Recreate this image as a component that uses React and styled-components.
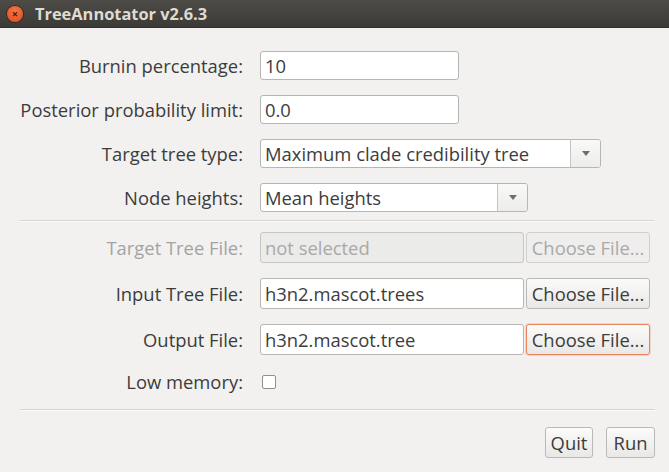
import styled, { createGlobalStyle } from "styled-components";

const GlobalStyle = createGlobalStyle`
  html, body {
    margin: 0;
    padding: 0;
    background: #f2f1f0;
  }
  body {
    font-family: "Open Sans", "DejaVu Sans", sans-serif;
    color: #3c3c3c;
  }
`;

const Window = styled.div`
  width: 669px;
  height: 472px;
  display: flex;
  flex-direction: column;
  background: #f2f1f0;
  overflow: hidden;
`;

const TitleBar = styled.div`
  height: 27px;
  flex-shrink: 0;
  display: flex;
  align-items: center;
  gap: 12px;
  padding-left: 7px;
  background: linear-gradient(#4d4b46, #3c3b37);
  border-bottom: 1px solid #2f2e2b;
`;

const CloseButton = styled.div`
  width: 16px;
  height: 16px;
  border-radius: 50%;
  background: radial-gradient(circle at 50% 35%, #f7754a, #df4b16);
  box-shadow: 0 0 0 1px #3a2a20;
  display: flex;
  align-items: center;
  justify-content: center;
  color: #3d1f12;
  font-size: 11px;
  font-weight: bold;
  line-height: 1;
`;

const Title = styled.div`
  color: #dfdbd2;
  font-size: 16.4px;
  font-weight: 700;
`;

const Body = styled.div`
  display: flex;
  flex-direction: column;
  padding: 23px 14px 0 0;
`;

const Section = styled.div`
  display: flex;
  flex-direction: column;
  gap: 15px;
`;

const Row = styled.div`
  display: flex;
  align-items: center;
  gap: 17px;
  height: ${(p) => p.$h || 29}px;
  margin-top: ${(p) => p.$top || 0}px;
`;

const Label = styled.div`
  width: 243px;
  text-align: right;
  font-size: 18.4px;
  color: ${(p) => (p.$disabled ? "#a3a3a3" : "#3c3c3c")};
  white-space: nowrap;
`;

const Field = styled.div`
  box-sizing: border-box;
  width: ${(p) => p.$w}px;
  height: 100%;
  display: flex;
  align-items: center;
  padding-left: 4px;
  font-size: 18.4px;
  border: 1px solid ${(p) => (p.$disabled ? "#c6c6c4" : "#b6b6b3")};
  border-radius: 3px;
  background: ${(p) => (p.$disabled ? "#ebebea" : "#ffffff")};
  color: ${(p) => (p.$disabled ? "#a9a9a8" : "#3c3c3c")};
  white-space: nowrap;
  overflow: hidden;
`;

const Combo = styled.div`
  box-sizing: border-box;
  width: ${(p) => p.$w}px;
  height: 100%;
  display: flex;
  border: 1px solid #b6b6b3;
  border-radius: 3px;
  background: #ffffff;
  overflow: hidden;
`;

const ComboText = styled.div`
  flex: 1;
  display: flex;
  align-items: center;
  padding-left: 4px;
  font-size: 18.4px;
  white-space: nowrap;
`;

const ComboArrow = styled.div`
  width: 29px;
  border-left: 1px solid #c4c4c2;
  background: linear-gradient(#f9f9f8, #ececeb);
  display: flex;
  align-items: center;
  justify-content: center;

  &::after {
    content: "";
    border-left: 4px solid transparent;
    border-right: 4px solid transparent;
    border-top: 5px solid #6e6e6c;
  }
`;

const FileControl = styled.div`
  display: flex;
  gap: 2px;
  height: 100%;
`;

const Button = styled.button`
  box-sizing: border-box;
  height: ${(p) => p.$h || 31}px;
  width: ${(p) => p.$w}px;
  padding: 0;
  font-family: inherit;
  font-size: 18.4px;
  white-space: nowrap;
  color: ${(p) => (p.$disabled ? "#a9a9a8" : "#3c3c3c")};
  border: 1px solid
    ${(p) => (p.$focused ? "#e9835c" : p.$disabled ? "#cfcfcd" : "#b9b9b6")};
  border-radius: 3px;
  background: ${(p) =>
    p.$disabled ? "#efeeed" : "linear-gradient(#fbfbfa, #e9e8e6)"};
  box-shadow: ${(p) => (p.$focused ? "0 0 0 1px rgba(233,131,92,0.25)" : "none")};
`;

const Checkbox = styled.div`
  box-sizing: border-box;
  width: 14px;
  height: 14px;
  margin-left: 2px;
  border: 1px solid #8f8f8d;
  border-radius: 2px;
  background: #ffffff;
`;

const Separator = styled.div`
  height: 1px;
  margin: ${(p) => p.$m};
  margin-left: 20px;
  background: #d6d5d3;
  border-bottom: 1px solid #fbfbfa;
`;

const ButtonBar = styled.div`
  display: flex;
  justify-content: flex-end;
  gap: 13px;
`;

export default function App() {
  return (
    <>
      <GlobalStyle />
      <Window>
        <TitleBar>
          <CloseButton>×</CloseButton>
          <Title>TreeAnnotator v2.6.3</Title>
        </TitleBar>
        <Body>
          <Section>
            <Row>
              <Label>Burnin percentage:</Label>
              <Field $w={199}>10</Field>
            </Row>
            <Row>
              <Label>Posterior probability limit:</Label>
              <Field $w={199}>0.0</Field>
            </Row>
            <Row>
              <Label>Target tree type:</Label>
              <Combo $w={341}>
                <ComboText>Maximum clade credibility tree</ComboText>
                <ComboArrow />
              </Combo>
            </Row>
            <Row>
              <Label>Node heights:</Label>
              <Combo $w={268}>
                <ComboText>Mean heights</ComboText>
                <ComboArrow />
              </Combo>
            </Row>
          </Section>
          <Separator $m="8px 0 10px" />
          <Section>
            <Row $h={31}>
              <Label $disabled>Target Tree File:</Label>
              <FileControl>
                <Field $w={264} $disabled>
                  not selected
                </Field>
                <Button $w={124} $disabled>
                  Choose File...
                </Button>
              </FileControl>
            </Row>
            <Row $h={31}>
              <Label>Input Tree File:</Label>
              <FileControl>
                <Field $w={264}>h3n2.mascot.trees</Field>
                <Button $w={124}>Choose File...</Button>
              </FileControl>
            </Row>
            <Row $h={31}>
              <Label>Output File:</Label>
              <FileControl>
                <Field $w={264}>h3n2.mascot.tree</Field>
                <Button $w={124} $focused>
                  Choose File...
                </Button>
              </FileControl>
            </Row>
          </Section>
          <Row $top={12}>
            <Label>Low memory:</Label>
            <Checkbox />
          </Row>
          <Separator $m="13px 0 16px" />
          <ButtonBar>
            <Button $w={48}>Quit</Button>
            <Button $w={49}>Run</Button>
          </ButtonBar>
        </Body>
      </Window>
    </>
  );
}
